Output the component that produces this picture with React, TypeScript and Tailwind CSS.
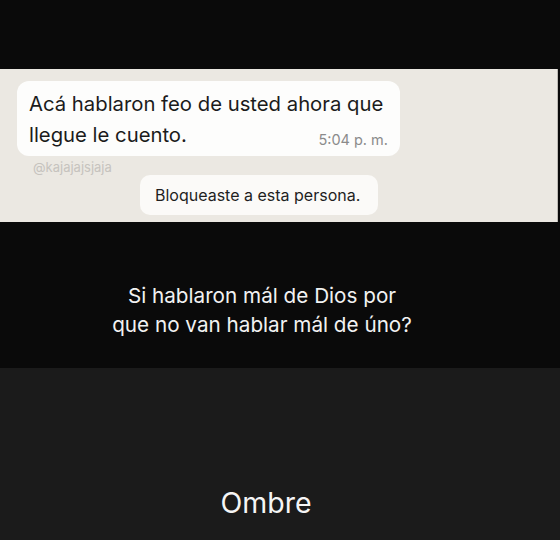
export default function App() {
  return (
    <div className="w-[560px] h-[540px] bg-[#0a0a0a] flex flex-col font-['Inter','Liberation_Sans',Arial,sans-serif] overflow-hidden">
      <div className="h-[69px] shrink-0" />

      {/* chat screenshot */}
      <div className="h-[153px] shrink-0 mr-[2px] bg-[#ebe8e2] border-r border-[#bdbab4] flex flex-col">
        <div className="relative ml-[17px] mt-[12px] w-[383px] h-[75px] bg-[#fdfdfc] rounded-[12px] pl-[12px] pt-[7px]">
          <p className="text-[20.3px] leading-[31px] text-[#1b1b1b]">
            Acá hablaron feo de usted ahora que
            <br />
            llegue le cuento.
          </p>
          <span className="absolute right-[12px] bottom-[8px] text-[14.5px] leading-[16px] text-[#8b8b8b]">
            5:04 p. m.
          </span>
        </div>
        <div className="ml-[33px] mt-[3px] h-[16px] text-[13px] leading-[16px] text-[#c6c3be]">
          @kajajajsjaja
        </div>
        <div className="ml-[140px] w-[238px] h-[40px] bg-[#fbfaf8] rounded-[10px] flex items-center pl-[15px] text-[16px] text-[#1f1f1f]">
          Bloqueaste a esta persona.
        </div>
      </div>

      {/* caption */}
      <div className="h-[146px] shrink-0 pt-[59px] pr-[36px] text-center text-[20.7px] leading-[29px] text-[#f2f2f2]">
        Si hablaron mál de Dios por
        <br />
        que no van hablar mál de úno?
      </div>

      <div className="flex-1 bg-[#1b1b1b] pt-[117px] pr-[28px] text-center text-[28.5px] leading-[36px] text-[#f5f5f5]">
        Ombre
      </div>
    </div>
  );
}
